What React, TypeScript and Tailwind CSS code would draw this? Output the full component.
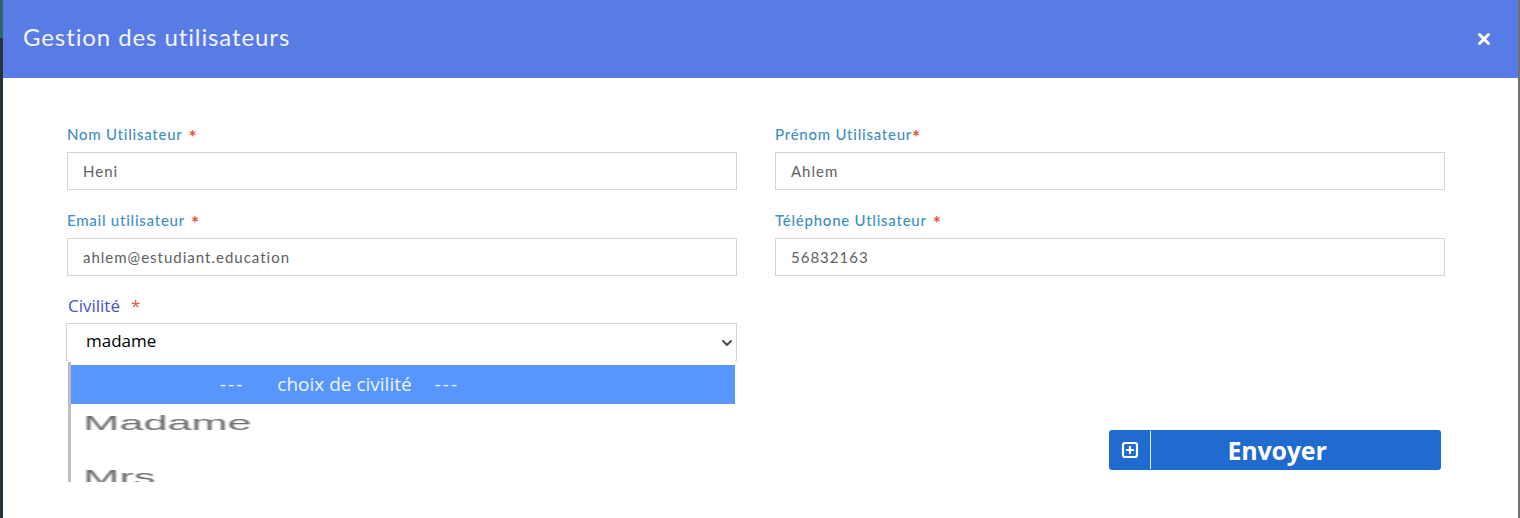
import { ChevronDown, X } from 'lucide-react';
import type { ReactNode } from 'react';

function Label({ children, gap = 'ml-[6px]' }: { children: ReactNode; gap?: string }) {
  return (
    <label className="flex h-[20px] items-center pb-[2px] text-[15px] leading-[20px] font-medium tracking-[0.75px] text-[#3d8fbf]">
      {children}
      <span className={`${gap} h-[20px] text-[19px] leading-[26px] font-bold tracking-normal text-[#e8503f]`}>*</span>
    </label>
  );
}

function Field({ label, value, gap }: { label: string; value: string; gap?: string }) {
  return (
    <div className="flex flex-col gap-[7px]">
      <Label gap={gap}>{label}</Label>
      <div className="flex h-[38px] items-center border border-[#d1d3e0] bg-white pl-[15px] text-[15px] tracking-[1px] text-[#5f5f5f]">
        {value}
      </div>
    </div>
  );
}

export default function App() {
  return (
    <div className="flex h-[518px] w-[1520px] overflow-hidden bg-[#26333b] font-['Lato','Open_Sans',sans-serif]">
      <div className="w-[3px] shrink-0">
        <div className="h-[38px] bg-[#2f6570]" />
      </div>
      <div className="flex w-[1515px] flex-col bg-white">
        <header className="flex h-[78px] shrink-0 items-center justify-between bg-[#587be6] pb-[5px] pl-[20px] pr-[25px]">
          <h1 className="text-[24px] font-normal tracking-[0.9px] text-[#f2f5ff]">Gestion des utilisateurs</h1>
          <X size={18} strokeWidth={4} className="mt-[4px] text-white" />
        </header>

        <main className="pl-[64px] pr-[73px] pt-[47px]">
          <div className="grid grid-cols-2 gap-x-[38px] gap-y-[21px]">
            <Field label="Nom Utilisateur" value="Heni" />
            <Field label="Prénom Utilisateur" value="Ahlem" gap="ml-0" />
            <Field label="Email utilisateur" value="ahlem@estudiant.education" />
            <Field label="Téléphone Utlisateur" value="56832163" />
            <div className="relative -mt-px flex flex-col gap-[7px]">
              <div className="h-[20px] pl-px font-['Open_Sans',sans-serif] text-[17px] leading-[20px] text-[#4a50d0]">
                Civilité<span className="ml-[11px] text-[17px] text-[#e8503f]">*</span>
              </div>
              <div className="-ml-px flex h-[38px] items-center justify-between border border-[#d1d3e0] bg-white pb-[2px] pl-[19px] pr-[1px] font-['Open_Sans',sans-serif] text-[17px] text-black">
                madame
                <ChevronDown size={16} strokeWidth={3} className="mt-[3px] text-[#4d4d4d]" />
              </div>

              {/* opened options list, sits over the select's bottom edge */}
              <div className="absolute left-px top-[62px] h-[124px] w-[667px] bg-white pt-[4px]">
                <div className="h-[120px] overflow-hidden border-l-[3px] border-[#bdbdbd] pt-[3px]">
                  <div className="flex h-[39px] items-center bg-[#5797fd] pl-[149px] font-['Open_Sans',sans-serif] text-[19px] text-[#eef4ff]">
                    <span className="tracking-[2px]">---</span>
                    <span className="ml-[33px]">choix de civilité</span>
                    <span className="ml-[23px] tracking-[2px]">---</span>
                  </div>
                  <div className="origin-left scale-x-[2.06] pl-[6px] pt-[6px] font-['Liberation_Sans',sans-serif] text-[21px] leading-[26px] text-[#6f6f6f] blur-[0.6px]">
                    Madame
                  </div>
                  <div className="mt-[28px] origin-left scale-x-[2.06] pl-[6px] font-['Liberation_Sans',sans-serif] text-[21px] leading-[26px] text-[#6f6f6f] blur-[0.6px]">
                    Mrs
                  </div>
                </div>
              </div>
            </div>
          </div>
        </main>

        {/* submit button */}
        <div className="flex justify-end pr-[77px] pt-[69px]">
          <button className="flex h-[40px] w-[332px] items-center rounded-[3px] bg-[#206bcf] text-white">
            <span className="flex h-[38px] w-[42px] items-center justify-center border-r border-white/90">
              <svg width="18" height="18" viewBox="0 0 18 18" fill="none" stroke="currentColor" strokeWidth="2.2">
                <rect x="2" y="2" width="14" height="14" rx="2" />
                <path d="M9 5v8M5 9h8" />
              </svg>
            </span>
            <span className="flex-1 pr-[38px] font-['Open_Sans',sans-serif] text-[25px] font-bold leading-none tracking-[-0.2px]">Envoyer</span>
          </button>
        </div>
      </div>
      <div className="w-[2px] bg-[#6f7278]" />
    </div>
  );
}
